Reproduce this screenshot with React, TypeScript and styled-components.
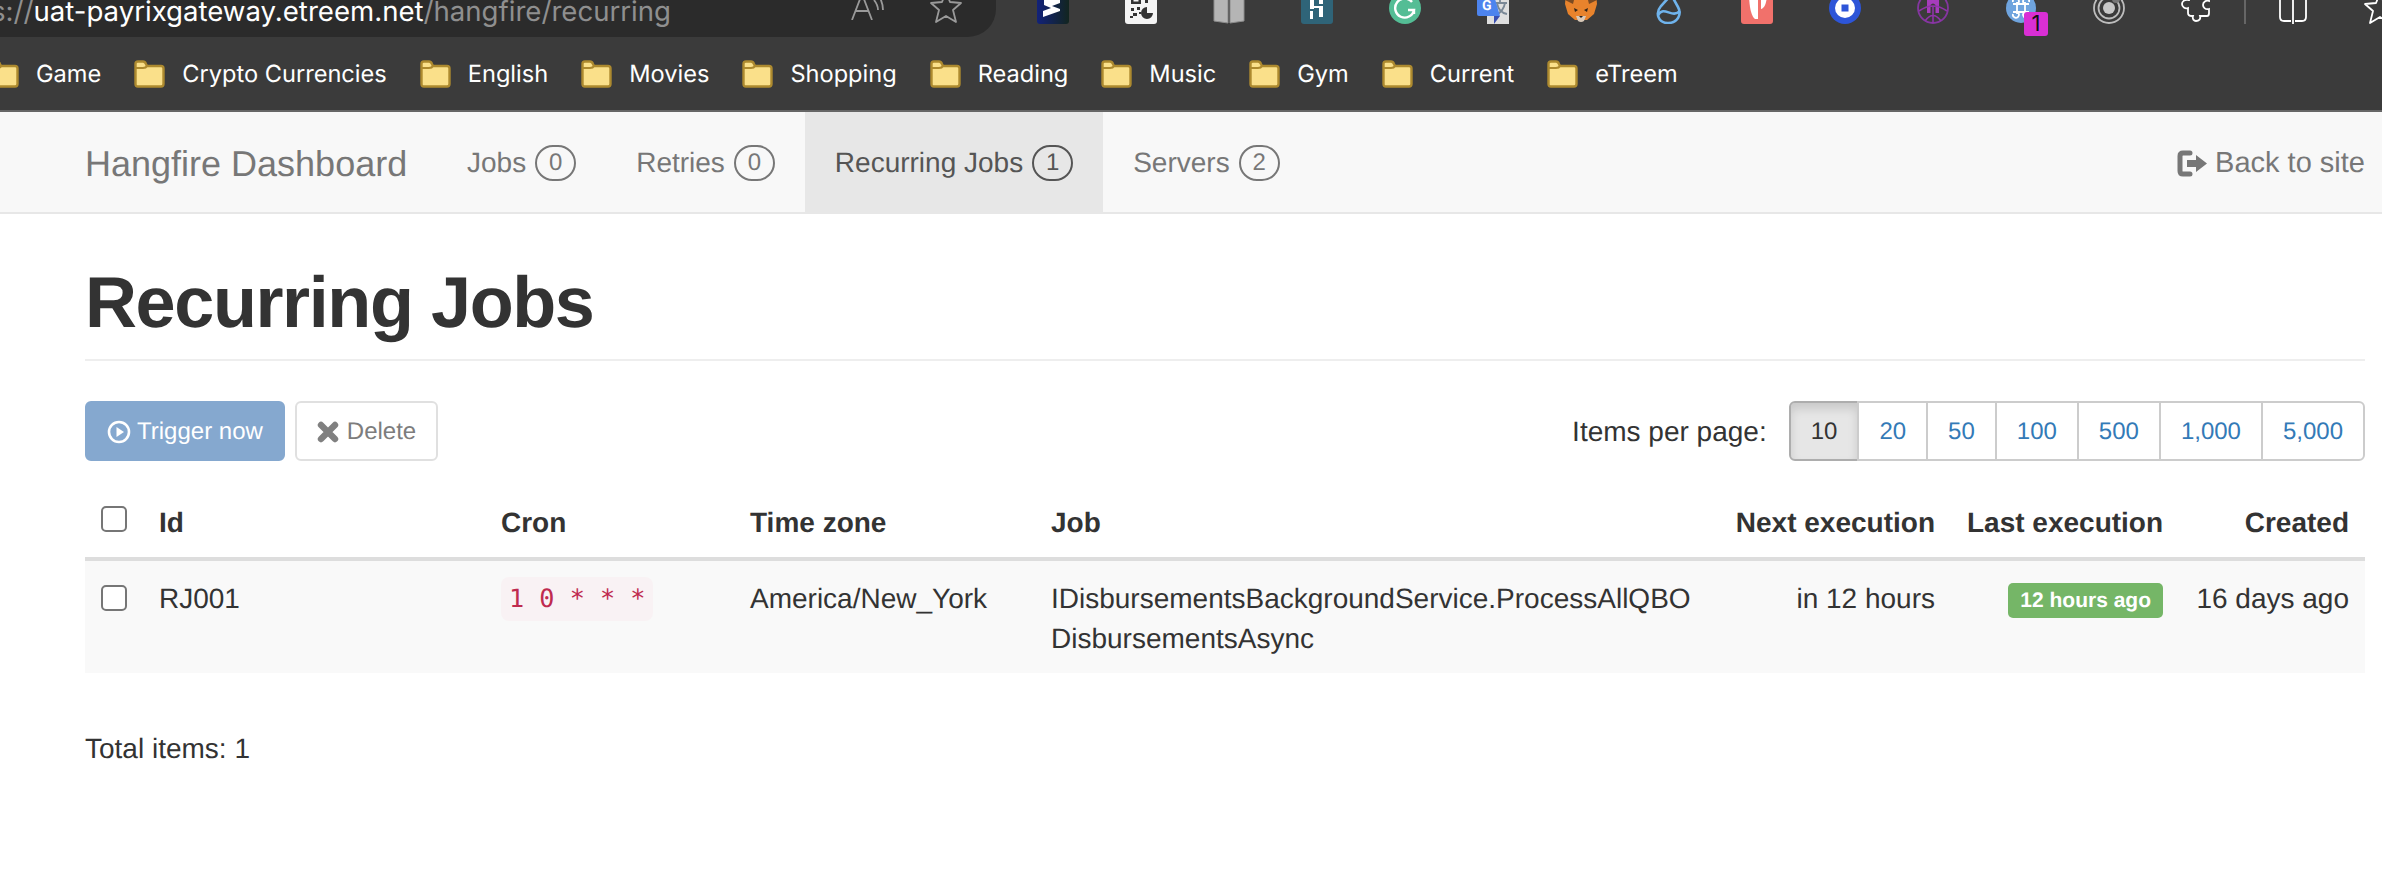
import * as React from 'react';
import styled, { createGlobalStyle } from 'styled-components';

const GlobalStyle = createGlobalStyle`
    html, body {
        margin: 0;
        background: #fff;
        overflow: hidden;
    }

    body {
        font-family: "Liberation Sans", Arial, sans-serif;
        font-size: 28px;
        line-height: 40px;
        color: #333;
        text-rendering: geometricPrecision;
    }

    * {
        box-sizing: border-box;
    }
`;

const bookmarks = ['Game', 'Crypto Currencies', 'English', 'Movies', 'Shopping', 'Reading', 'Music', 'Gym', 'Current', 'eTreem'];
const navItems = [
    { label: 'Jobs', count: 0 },
    { label: 'Retries', count: 0 },
    { label: 'Recurring Jobs', count: 1, active: true },
    { label: 'Servers', count: 2 },
];
const pageSizes = ['10', '20', '50', '100', '500', '1,000', '5,000'];
const columnWidths = [58, 342, 249, 301, 684, 232, 228, 186];

const ExtensionIcons = [
    <svg key="s" width="32" height="32" viewBox="0 0 32 32">
        <defs>
            <linearGradient id="sGrad" x1="0" x2="1" y1="0" y2="0">
                <stop offset="0" stopColor="#12227a" />
                <stop offset="1" stopColor="#12251f" />
            </linearGradient>
        </defs>
        <rect width="32" height="32" rx="3" fill="url(#sGrad)" />
        <path d="M7 2 H23 V11 L15 14 L23 17 V19 L6 25 V19 L14 16 L7 13 Z" fill="#fff" />
    </svg>,
    <svg key="qr" width="32" height="32" viewBox="0 0 32 32">
        <rect width="32" height="32" rx="3" fill="#f4f4f4" />
        <path fillRule="evenodd" d="M6 0h10v12H6z M8.500 3v6.500h5V3z" fill="#333" />
        <path d="M10 5h2v3h-2z M20 5h3v6h-3z M25 5h3v3h-3z" fill="#333" />
        <path d="M6 16h3v3H6z M12 15h3v3h-3z M8 21h4v3H8z M14 20h2v2h-2z M5 24h3v2H5z" fill="#333" />
        <path d="M22 15 a6 6 0 1 0 6 6 h-6 z" fill="#333" />
    </svg>,
    <svg key="book" width="32" height="32" viewBox="0 0 32 32">
        <path d="M1 1 H15 V31 L1 29 Z M17 1 H31 V29 L17 31 Z" fill="#b5b5b5" stroke="#8c8c8c" strokeWidth="1" />
    </svg>,
    <svg key="dash" width="32" height="32" viewBox="0 0 32 32">
        <rect width="32" height="32" rx="3" fill="#2f6478" />
        <path d="M9 4h4v13h-4z M9 19h3v8H9z M18 3h4v9h-4z M18 14h4v11h-4z M13 14h5v2h-5z" fill="#fff" />
    </svg>,
    <svg key="g" width="32" height="32" viewBox="0 0 32 32">
        <circle cx="16" cy="16" r="16" fill="#54bd95" />
        <path d="M23 10 A9.5 9.5 0 1 0 25 18 L19 18 M25 18 L25 22" fill="none" stroke="#fff" strokeWidth="2.4" />
    </svg>,
    <svg key="translate" width="32" height="32" viewBox="0 0 32 32">
        <rect x="10" y="0" width="22" height="32" fill="#dfdfdf" />
        <path d="M17 11h13 M23 8v3 M20 11c1 6 5 10 10 11 M28 11c-1 6-5 10-9 12" fill="none" stroke="#7a8896" strokeWidth="1.8" />
        <path d="M17 24 L23 24 L17 32 Z" fill="#3a4fb0" />
        <path d="M0 2 Q0 0 2 0 L16 0 L23 24 L2 24 Q0 24 0 22 Z" fill="#4d84ee" />
        <text x="5" y="18" fontFamily="Roboto, sans-serif" fontSize="14" fontWeight="700" fill="#fff">G</text>
    </svg>,
    <svg key="fox" width="32" height="32" viewBox="0 0 32 32">
        <path d="M1 0 L13 6 L19 6 L31 0 L32 12 L29 22 L22 28 L10 28 L3 22 L0 12 Z" fill="#e8832c" />
        <path d="M1 0 L10 4 L8 12 L0 8 Z M31 0 L22 4 L24 12 L32 8 Z" fill="#7a4a22" />
        <path d="M9 16 L13 18 L10 20 Z M23 16 L19 18 L22 20 Z" fill="#2f2419" />
        <path d="M11 24 L21 24 L19 29 Q16 31 13 29 Z" fill="#d9c9b8" />
        <path d="M14 24 L18 24 L16 26 Z" fill="#222" />
    </svg>,
    <svg key="sol" width="32" height="32" viewBox="0 0 32 32">
        <path d="M19 2 L8 14 C2 21 5 31 15 31 C25 31 29 22 25 15 L20 6" fill="none" stroke="#6fb3ec" strokeWidth="2.6" />
        <path d="M5 23 C11 13 19 27 27 19" fill="none" stroke="#6fb3ec" strokeWidth="2.6" />
    </svg>,
    <svg key="p" width="32" height="32" viewBox="0 0 32 32">
        <rect width="32" height="32" rx="3" fill="#f1716b" />
        <path d="M8 0 H17 V27 H14 C10 24 8 14 8 0 Z" fill="#fff" />
        <path d="M20 0 H26 C26 10 24 16 20 17 Z" fill="#fff" />
    </svg>,
    <svg key="blue" width="32" height="32" viewBox="0 0 32 32">
        <circle cx="16" cy="16" r="16" fill="#2d55d8" />
        <circle cx="16" cy="16" r="10" fill="#fff" />
        <rect x="12.5" y="12.5" width="7" height="7" fill="#2d55d8" />
    </svg>,
    <svg key="purple" width="32" height="32" viewBox="0 0 32 32">
        <circle cx="16" cy="16" r="15" fill="none" stroke="#8436a0" strokeWidth="1.8" />
        <path d="M10 21 V8 Q16 -1 22 8 V21 H18.500 V13 Q16 10 13.500 13 V21 Z" fill="#a63cbc" />
        <path d="M2 19 Q16 9 30 19 M16 14 V31 M8 29 Q16 18 24 29" fill="none" stroke="#8f33a8" strokeWidth="1.6" />
    </svg>,
    <svg key="cmd" width="32" height="32" viewBox="0 0 32 32">
        <circle cx="16" cy="16" r="15" fill="#6fa4de" />
        <path d="M12 10 V22 M20 10 V22 M8 12 H24 M8 20 H24 M12 12 A3 3 0 1 0 8 10 M20 12 A3 3 0 1 1 24 10 M12 20 A3 3 0 1 1 8 22 M20 20 A3 3 0 1 0 24 22" fill="none" stroke="#fff" strokeWidth="1.8" />
    </svg>,
    <svg key="target" width="32" height="32" viewBox="0 0 32 32">
        <circle cx="16" cy="16" r="15" fill="none" stroke="#bdbdbd" strokeWidth="1.8" />
        <circle cx="16" cy="16" r="10.5" fill="none" stroke="#bdbdbd" strokeWidth="1.8" />
        <circle cx="16" cy="16" r="6" fill="#c8c8c8" />
        <circle cx="23" cy="7" r="4" fill="#777" />
    </svg>,
    <svg key="puzzle" width="32" height="32" viewBox="0 0 32 32">
        <path d="M8 2 V8 C3 7 1 10 1 12 C1 15 4 17 7 16 V21 C7 23 9 24 11 24 H12 C11 27 13 29 15 29 C18 29 20 27 19 24 H26 C27 24 28 23 28 21 V17 C24 18 22 15 22 13 C22 10 25 8 28 9 V2" fill="none" stroke="#fff" strokeWidth="1.8" />
    </svg>,
];

const App = () => (
    <>
        <GlobalStyle />
        <BrowserChrome>
            <ToolbarRow>
                <AddressPill>
                    <UrlText>
                        <UrlMuted>s://</UrlMuted>uat-payrixgateway.etreem.net<UrlMuted>/hangfire/recurring</UrlMuted>
                    </UrlText>
                    <PillIcon width="34" height="32" viewBox="0 0 34 32" $top={-12}>
                        <path d="M1 32 L11 6 L21 32 M5 23 H17" fill="none" stroke="#9a9a9a" strokeWidth="1.8" />
                        <path d="M23 12 Q27 17 27 22 M28 8 Q32 15 32 22" fill="none" stroke="#9a9a9a" strokeWidth="1.8" />
                    </PillIcon>
                    <PillIcon width="32" height="32" viewBox="0 0 32 32" $top={-9}>
                        <path d="M16 1 L20 11 L31 12 L23 19 L26 31 L16 25 L6 31 L9 19 L1 12 L12 11 Z" fill="none" stroke="#9a9a9a" strokeWidth="1.8" strokeLinejoin="round" />
                    </PillIcon>
                </AddressPill>
                <ExtensionRow>
                    {ExtensionIcons.map((icon, i) => (
                        <ExtensionSlot key={i}>
                            {icon}
                            {i === 11 && <ExtensionBadge>1</ExtensionBadge>}
                        </ExtensionSlot>
                    ))}
                    <ToolbarDivider />
                    <ExtensionSlot>
                        <svg width="30" height="32" viewBox="0 0 30 32">
                            <path d="M2 0 V25 Q2 29 6 29 H13 M28 0 V25 Q28 29 24 29 H17 M15 0 V32" fill="none" stroke="#fff" strokeWidth="1.8" />
                        </svg>
                    </ExtensionSlot>
                    <ExtensionSlot>
                        <svg width="32" height="32" viewBox="0 0 32 32">
                            <path d="M16 1 L20 11 L31 12 L23 19 L26 31 L16 25 L6 31 L9 19 L1 12 L12 11 Z" fill="none" stroke="#fff" strokeWidth="1.8" strokeLinejoin="round" />
                        </svg>
                    </ExtensionSlot>
                </ExtensionRow>
            </ToolbarRow>
            <BookmarkRow>
                {bookmarks.map(name => (
                    <Bookmark key={name}>
                        <svg width="31" height="28" viewBox="0 0 31 28">
                            <path d="M1.500 6 V4 Q1.500 1.500 4 1.500 H9 Q11 1.500 12 4 L13 6 H27 Q29.500 6 29.500 8.500 V24 Q29.500 26.500 27 26.500 H4 Q1.500 26.500 1.500 24 Z" fill="#fae08a" stroke="#ad8a2f" strokeWidth="2.4" />
                            <path d="M1.500 8 H9 Q12 8 13 6" fill="none" stroke="#ad8a2f" strokeWidth="2" />
                        </svg>
                        {name}
                    </Bookmark>
                ))}
            </BookmarkRow>
        </BrowserChrome>

        <Navbar>
            <Brand>Hangfire Dashboard</Brand>
            {navItems.map(item => (
                <NavTab key={item.label} $active={item.active}>
                    {item.label}
                    <NavBadge>{item.count}</NavBadge>
                </NavTab>
            ))}
            <BackLink>
                <svg width="31" height="27" viewBox="0 0 31 27">
                    <path d="M13 3 H6 Q3 3 3 6 V21 Q3 24 6 24 H13" fill="none" stroke="#777" strokeWidth="5" strokeLinecap="round" />
                    <path d="M10 10 H19 V5 L30 13.500 L19 22 V17 H10 Z" fill="#777" />
                </svg>
                Back to site
            </BackLink>
        </Navbar>

        <Main>
            <PageTitle>Recurring Jobs</PageTitle>
            <ActionBar>
                <ButtonRow>
                    <ActionButton $primary>
                        <svg width="24" height="24" viewBox="0 0 24 24">
                            <circle cx="12" cy="12" r="10" fill="none" stroke="#fff" strokeWidth="2.6" />
                            <path d="M9.500 7 L17 12 L9.500 17 Z" fill="#fff" />
                        </svg>
                        Trigger now
                    </ActionButton>
                    <ActionButton>
                        <svg width="22" height="22" viewBox="0 0 22 22">
                            <path d="M4 4 L18 18 M18 4 L4 18" stroke="#808080" strokeWidth="6.4" strokeLinecap="round" />
                        </svg>
                        Delete
                    </ActionButton>
                </ButtonRow>
                <PageSizer>
                    <PageSizeLabel>Items per page:</PageSizeLabel>
                    <PageSizeGroup>
                        {pageSizes.map((size, i) => (
                            <PageSizeButton key={size} $active={i === 0}>{size}</PageSizeButton>
                        ))}
                    </PageSizeGroup>
                </PageSizer>
            </ActionBar>

            <JobsTable>
                <colgroup>
                    {columnWidths.map((w, i) => <col key={i} width={w} />)}
                </colgroup>
                <thead>
                    <tr>
                        <HeadCell><RowCheck type="checkbox" $top={3} /></HeadCell>
                        <HeadCell>Id</HeadCell>
                        <HeadCell>Cron</HeadCell>
                        <HeadCell>Time zone</HeadCell>
                        <HeadCell>Job</HeadCell>
                        <HeadCell $right>Next execution</HeadCell>
                        <HeadCell $right>Last execution</HeadCell>
                        <HeadCell $right>Created</HeadCell>
                    </tr>
                </thead>
                <tbody>
                    <tr>
                        <BodyCell><RowCheck type="checkbox" $top={6} /></BodyCell>
                        <BodyCell>RJ001</BodyCell>
                        <BodyCell><CronCode>1 0 * * *</CronCode></BodyCell>
                        <BodyCell>America/New_York</BodyCell>
                        <BodyCell>IDisbursementsBackgroundService.ProcessAllQBO<br />DisbursementsAsync</BodyCell>
                        <BodyCell $right>in 12 hours</BodyCell>
                        <BodyCell $right><SuccessLabel>12 hours ago</SuccessLabel></BodyCell>
                        <BodyCell $right>16 days ago</BodyCell>
                    </tr>
                </tbody>
            </JobsTable>

            <TotalItems>Total items: 1</TotalItems>
        </Main>
    </>
);

export default App;

const BrowserChrome = styled.div`
    height: 112px;
    background: #3b3b3b;
    border-bottom: 2px solid #666;
    overflow: hidden;
`;

const ToolbarRow = styled.div`
    display: flex;
    height: 48px;
`;

const AddressPill = styled.div`
    display: flex;
    flex: none;
    gap: 45px;
    width: 996px;
    height: 37px;
    padding-right: 34px;
    background: #2b2b2b;
    border-bottom-right-radius: 28px;
    font-family: Inter, "Liberation Sans", sans-serif;
    overflow: hidden;
`;

const UrlText = styled.div`
    flex: 1;
    margin: -3px 0 0 -9px;
    font-size: 27.6px;
    line-height: 28px;
    color: #fff;
    white-space: nowrap;
`;

const UrlMuted = styled.span`
    color: #8f8f8f;
`;

const PillIcon = styled.svg<{ $top: number }>`
    flex: none;
    margin-top: ${p => p.$top}px;
`;

const ExtensionRow = styled.div`
    display: flex;
    flex: none;
    gap: 56px;
    height: 24px;
    margin-left: 41px;
`;

const ExtensionSlot = styled.div`
    position: relative;
    flex: none;
    height: 32px;
    margin-top: -8px;
`;

const ExtensionBadge = styled.span`
    position: absolute;
    top: 20px;
    left: 19px;
    width: 24px;
    height: 24px;
    background: #d92fd4;
    border-radius: 3px;
    font-family: Inter, sans-serif;
    font-size: 22px;
    line-height: 24px;
    text-align: center;
    color: #111;
`;

const ToolbarDivider = styled.div`
    flex: none;
    width: 2px;
    height: 24px;
    margin: 0 -24px 0 -25px;
    background: #666;
`;

const BookmarkRow = styled.div`
    display: flex;
    align-items: center;
    gap: 33px;
    height: 52px;
    margin-left: -12px;
    font-family: Inter, "Liberation Sans", sans-serif;
    font-size: 23.6px;
    color: #fff;
`;

const Bookmark = styled.div`
    display: flex;
    flex: none;
    align-items: center;
    gap: 17px;
    line-height: 28px;
`;

const Navbar = styled.nav`
    display: flex;
    height: 102px;
    padding: 0 17px 0 85px;
    background: #f8f8f8;
    border-bottom: 2px solid #e7e7e7;
    color: #777;
`;

const Brand = styled.div`
    width: 352px;
    padding-top: 2px;
    font-size: 36px;
    line-height: 100px;
`;

const NavTab = styled.div<{ $active?: boolean }>`
    display: flex;
    align-items: center;
    gap: 9px;
    height: 100px;
    padding: 2px 30px 0;
    background: ${p => (p.$active ? '#e7e7e7' : 'transparent')};
    color: ${p => (p.$active ? '#555' : '#777')};
`;

const NavBadge = styled.span`
    display: block;
    min-width: 41px;
    height: 36px;
    border: 2px solid currentColor;
    border-radius: 20px;
    font-size: 24px;
    line-height: 32px;
    text-align: center;
`;

const BackLink = styled.div`
    display: flex;
    align-items: center;
    gap: 7px;
    margin-left: auto;
    padding-top: 2px;
    font-size: 29px;
`;

const Main = styled.main`
    padding: 0 17px 0 85px;
`;

const PageTitle = styled.h1`
    margin: 50px 0 40px;
    padding-bottom: 16px;
    border-bottom: 2px solid #eee;
    font-size: 72px;
    font-weight: 700;
    line-height: 79px;
    letter-spacing: -1.4px;
    color: #333;
`;

const ActionBar = styled.div`
    display: flex;
    justify-content: space-between;
    height: 60px;
    margin-bottom: 24px;
`;

const ButtonRow = styled.div`
    display: flex;
    gap: 10px;
`;

const ActionButton = styled.div<{ $primary?: boolean }>`
    display: flex;
    align-items: center;
    gap: ${p => (p.$primary ? 6 : 8)}px;
    height: 60px;
    padding: 2px 20px 0;
    background: ${p => (p.$primary ? '#85a8cf' : '#fff')};
    border: 2px solid ${p => (p.$primary ? '#85a8cf' : '#e0e0e0')};
    border-radius: 6px;
    font-size: 24px;
    color: ${p => (p.$primary ? '#fff' : '#7d7d7d')};
`;

const PageSizer = styled.div`
    display: flex;
    align-items: center;
    gap: 22px;
`;

const PageSizeLabel = styled.span`
    padding-top: 2px;
    color: #333;
`;

const PageSizeGroup = styled.div`
    display: flex;
`;

const PageSizeButton = styled.div<{ $active?: boolean }>`
    height: 60px;
    margin-left: -2px;
    padding: 2px 20px 0;
    background: ${p => (p.$active ? '#e6e6e6' : '#fff')};
    border: 2px solid ${p => (p.$active ? '#adadad' : '#ccc')};
    box-shadow: ${p => (p.$active ? 'inset 0 6px 10px rgba(0, 0, 0, 0.125)' : 'none')};
    font-size: 24px;
    line-height: 54px;
    color: ${p => (p.$active ? '#333' : '#337ab7')};

    &:first-child {
        margin-left: 0;
        border-radius: 6px 0 0 6px;
    }

    &:last-child {
        border-radius: 0 6px 6px 0;
    }
`;

const JobsTable = styled.table`
    width: 2280px;
    table-layout: fixed;
    border-collapse: separate;
    border-spacing: 0;
`;

const HeadCell = styled.th<{ $right?: boolean }>`
    padding: 18px 16px 14px;
    border-bottom: 4px solid #ddd;
    font-weight: 700;
    line-height: 40px;
    text-align: ${p => (p.$right ? 'right' : 'left')};
    vertical-align: top;
    white-space: nowrap;
`;

const BodyCell = styled.td<{ $right?: boolean }>`
    padding: 18px 16px 14px;
    background: #f9f9f9;
    line-height: 40px;
    text-align: ${p => (p.$right ? 'right' : 'left')};
    vertical-align: top;
    white-space: nowrap;
`;

const RowCheck = styled.input<{ $top: number }>`
    display: block;
    width: 26px;
    height: 26px;
    margin: ${p => p.$top}px 0 0;
    appearance: none;
    background: #fff;
    border: 2px solid #767676;
    border-radius: 5px;
`;

const CronCode = styled.code`
    display: block;
    width: fit-content;
    margin-top: -2px;
    padding: 4px 8px;
    background: #f9f2f4;
    border-radius: 8px;
    font-family: "DejaVu Sans Mono", "Liberation Mono", monospace;
    font-size: 25.2px;
    line-height: 36px;
    color: #bf2b4f;
`;

const SuccessLabel = styled.span`
    display: block;
    width: fit-content;
    height: 35px;
    margin: 4px 0 0 auto;
    padding: 0 12px;
    background: #75b667;
    border-radius: 5px;
    font-size: 21px;
    font-weight: 700;
    line-height: 35px;
    color: #fff;
`;

const TotalItems = styled.div`
    margin-top: 56px;
`;
